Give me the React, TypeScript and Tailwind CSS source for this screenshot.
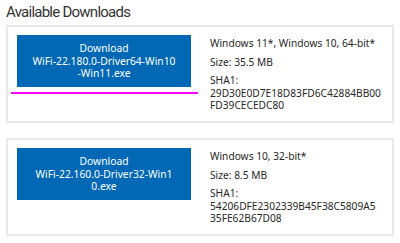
const downloads = [
  {
    lines: ["Download", "WiFi-22.180.0-Driver64-Win10", "-Win11.exe"],
    os: "Windows 11*, Windows 10, 64-bit*",
    size: "Size: 35.5 MB",
    sha: ["29D30E0D7E18D83FD6C42884BB00", "FD39CECEDC80"],
    marked: true,
  },
  {
    lines: ["Download", "WiFi-22.160.0-Driver32-Win1", "0.exe"],
    os: "Windows 10, 32-bit*",
    size: "Size: 8.5 MB",
    sha: ["54206DFE2302339B45F38C5809A5", "35FE62B67D08"],
    marked: false,
  },
];

export default function App() {
  return (
    <div
      className="h-[243px] w-[400px] overflow-hidden bg-white px-1.5 text-[#262626]"
      style={{ fontFamily: '"Noto Sans", sans-serif' }}
    >
      <h2
        className="pt-[3px] text-[15px] leading-[18px] tracking-[-0.75px] text-[#333]"
        style={{ fontFamily: "Roboto, sans-serif" }}
      >
        Available Downloads
      </h2>
      <div className="mt-[4px] flex w-[388px] flex-col gap-[15px]">
        {downloads.map((d, i) => (
          <div
            key={i}
            className="relative flex h-[98px] border-2 border-[#e9e9e9] pl-[9px] pt-[8px]"
          >
            <a
              href="#"
              className="flex h-[52px] w-[174px] shrink-0 flex-col items-center justify-center bg-[#0068b5] text-center text-[10.3px] leading-[12.5px] text-white"
            >
              {d.lines.map((l, j) => (
                <span key={j}>{l}</span>
              ))}
            </a>
            {d.marked && (
              <div className="absolute left-[3px] top-[65px] h-[2px] w-[187px] bg-[#ff00ff]" />
            )}
            <div className="ml-[19px] flex flex-col pt-[2px] text-[10.2px] leading-[12.5px]">
              <p>{d.os}</p>
              <p className="mt-[6px]">{d.size}</p>
              <p className="mt-[6px]">SHA1:</p>
              {d.sha.map((s, j) => (
                <p key={j}>{s}</p>
              ))}
            </div>
          </div>
        ))}
      </div>
    </div>
  );
}
